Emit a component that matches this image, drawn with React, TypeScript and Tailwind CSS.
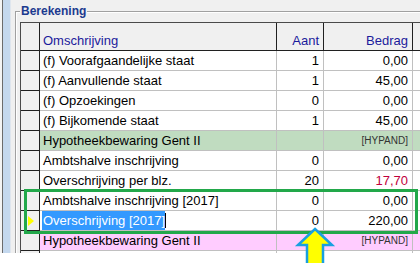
const rows = [
  { desc: '(f) Voorafgaandelijke staat', aant: '1', bedrag: '0,00' },
  { desc: '(f) Aanvullende staat', aant: '1', bedrag: '45,00' },
  { desc: '(f) Opzoekingen', aant: '0', bedrag: '0,00' },
  { desc: '(f) Bijkomende staat', aant: '1', bedrag: '45,00' },
  { desc: 'Hypotheekbewaring Gent II', aant: '', bedrag: '[HYPAND]', tone: 'green' },
  { desc: 'Ambtshalve inschrijving', aant: '0', bedrag: '0,00' },
  { desc: 'Overschrijving per blz.', aant: '20', bedrag: '17,70', red: true },
  { desc: 'Ambtshalve inschrijving [2017]', aant: '0', bedrag: '0,00' },
  { desc: 'Overschrijving [2017]', aant: '0', bedrag: '220,00', selected: true },
  { desc: 'Hypotheekbewaring Gent II', aant: '', bedrag: '[HYPAND]', tone: 'pink' },
];

const App = () => {
  return (
    <div className="relative w-[420px] h-[263px] overflow-hidden bg-white font-['Liberation_Sans',Arial,sans-serif] text-black">
      <div className="flex h-[253px]">
        {/* edge of the window behind */}
        <div className="w-[2px] bg-[#f4f4f4]" />
        <div className="w-px bg-[#6b6b6b]" />
        <div className="w-[7px] bg-[#c4d8ee]" />
        <div className="w-px bg-[#dfe6ee]" />

        <div className="flex-1 flex flex-col bg-[#f0f0f0] pl-[4px] pt-[11px]">
          {/* Berekening group box */}
          <div className="relative flex-1 flex flex-col border-l border-t border-[#a0a0a0]">
            <div className="flex-1 flex flex-col border-l border-t border-white pl-[3px] pt-[9px]">
              <div className="flex-1 flex flex-col border-l border-t border-[#4a4a4a] bg-white">
                {/* Header */}
                <div className="flex h-[28px] bg-[#f0f0f0] text-[13px] leading-[15px] text-[#1b1b9c]">
                  <div className="w-[19px] border-r border-b border-[#202020]" />
                  <div className="w-[237px] flex items-end pb-[2px] pl-[3px] border-r border-b border-[#202020]">
                    Omschrijving
                  </div>
                  <div className="w-[47px] flex items-end justify-end pb-[2px] pr-[4px] border-r border-b border-[#202020]">
                    Aant
                  </div>
                  <div className="w-[89px] flex items-end justify-end pb-[2px] pr-[4px] border-r border-b border-[#202020]">
                    Bedrag
                  </div>
                  <div className="flex-1 border-b border-[#202020]" />
                </div>

                {/* Rows */}
                {rows.map((row, i) => (
                  <div
                    key={i}
                    className={`flex h-[20px] text-[13px] leading-[19px] ${
                      row.tone === 'green' ? 'bg-[#c0dcc0]' : row.tone === 'pink' ? 'bg-[#ffccff]' : 'bg-white'
                    }`}
                  >
                    <div className="w-[19px] flex items-center pl-[7px] bg-[#f0f0f0] border-r border-b border-[#202020]">
                      {row.selected && (
                        <svg width="6" height="10" viewBox="0 0 6 10">
                          <polygon points="0,0 6,5 0,10" fill="#ffff00" />
                        </svg>
                      )}
                    </div>
                    <div
                      className={`w-[237px] flex items-center whitespace-nowrap overflow-hidden border-r border-b border-[#c0c0c0] ${
                        row.selected ? 'pl-[2px]' : 'pl-[3px]'
                      }`}
                    >
                      {row.selected ? (
                        <>
                          <span className="bg-[#3399ff] text-white pl-px">{row.desc}</span>
                          <span className="inline-block w-px h-[15px] bg-black" />
                        </>
                      ) : (
                        row.desc
                      )}
                    </div>
                    <div className="w-[47px] flex items-center justify-end pr-[4px] border-r border-b border-[#c0c0c0]">
                      {row.aant}
                    </div>
                    <div
                      className={`w-[89px] flex items-center justify-end pr-[4px] border-r border-b border-[#c0c0c0] ${
                        row.tone ? 'text-[10px] text-[#333333]' : row.red ? 'text-[#c0003c]' : ''
                      }`}
                    >
                      {row.bedrag}
                    </div>
                    <div className="flex-1 border-b border-[#c0c0c0]" />
                  </div>
                ))}

                {/* empty grid space below the last row */}
                <div className="flex flex-1">
                  <div className="w-[19px] bg-[#f0f0f0] border-r border-[#202020]" />
                  <div className="w-[237px] border-r border-[#c0c0c0]" />
                  <div className="w-[47px] border-r border-[#c0c0c0]" />
                  <div className="w-[89px] border-r border-[#c0c0c0]" />
                  <div className="flex-1" />
                </div>
              </div>
            </div>
            <div className="absolute -top-[8px] left-[4px] px-px bg-[#f0f0f0] text-[12px] leading-[14px] font-bold text-[#1c3a8f]">
              Berekening
            </div>
          </div>
        </div>
      </div>

      {/* annotation: green frame around the two 2017 rows */}
      <div className="absolute left-[24px] top-[189px] w-[394px] h-[45px] border-[3px] border-[#22a84a]" />

      {/* annotation: yellow arrow pointing at the Aant cell */}
      <svg className="absolute left-[295px] top-[227px] overflow-visible" width="40" height="40" viewBox="0 0 40 40">
        <polygon
          points="20,2 37,18 28,18 28,45 12,45 12,18 3,18"
          fill="#ffff00"
          stroke="#18a0e0"
          strokeWidth="2.5"
          strokeLinejoin="miter"
        />
      </svg>
    </div>
  );
};

export default App;
